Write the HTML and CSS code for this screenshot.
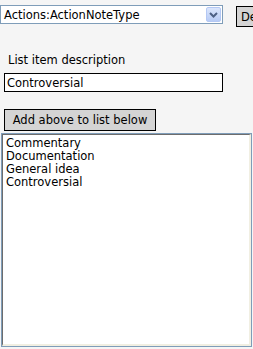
FILE: index.html
```html
<!DOCTYPE html>
<html lang="en">
<head>
    <meta charset="UTF-8">
    <title>List editor</title>
    <link rel="stylesheet" href="styles.css">
</head>
<body>
    <div class="top-row">
        <div class="select">
            <span class="select-text">Actions:ActionNoteType</span>
            <span class="select-arrow">
                <svg width="9" height="6" viewBox="0 0 9 6"><path d="M1 1 L4.5 4.5 L8 1" fill="none" stroke="#4d6185" stroke-width="2"/></svg>
            </span>
        </div>
        <button class="btn btn-cut">Delete</button>
    </div>
    <div class="label">List item description</div>
    <input class="text-input" type="text" value="Controversial">
    <button class="btn btn-add">Add above to list below</button>
    <div class="listbox">
        <div class="listbox-inner">
            <div>Commentary</div>
            <div>Documentation</div>
            <div>General idea</div>
            <div>Controversial</div>
        </div>
    </div>
</body>
</html>
```

FILE: styles.css
```css
html, body {
    overflow: hidden;
}
body {
    margin: 0;
    background: #f5f5f5;
    font-family: 'DejaVu Sans', Verdana, sans-serif;
    font-size: 11.5px;
    color: #000;
    width: 253px;
    height: 349px;
}
.top-row {
    display: flex;
    align-items: flex-start;
    padding-top: 5px;
    white-space: nowrap;
}
.select {
    flex-shrink: 0;
    width: 221px;
    height: 17px;
    border: 1px solid #7f9db9;
    background: #fff;
    display: flex;
    align-items: center;
    justify-content: space-between;
}
.select-text {
    padding-left: 3px;
}
.select-arrow {
    width: 15px;
    height: 15px;
    margin-right: 1px;
    background: linear-gradient(180deg, #dbe6fc, #b7cbf5);
    border: 1px solid #b4c8f4;
    border-radius: 2px;
    box-sizing: border-box;
    display: flex;
    align-items: center;
    justify-content: center;
}
.btn {
    font-family: 'DejaVu Sans', Verdana, sans-serif;
    font-size: 11.5px;
    background: #d4d4d4;
    border: 1px solid #000;
    padding: 0 8px;
    color: #000;
}
.btn-cut {
    flex-shrink: 0;
    margin-left: 13px;
    height: 21px;
    margin-top: 1px;
    padding: 0 4px;
}
.label {
    margin: 26px 0 0 8px;
    height: 14px;
}
.text-input {
    display: block;
    margin: 6px 0 0 4px;
    width: 219px;
    height: 19px;
    box-sizing: border-box;
    border: 1px solid #000;
    padding: 0 2px;
    font-family: 'DejaVu Sans', Verdana, sans-serif;
    font-size: 11.5px;
    outline: none;
}
.btn-add {
    display: block;
    margin: 17px 0 0 4px;
    height: 22px;
    width: 152px;
    padding: 0;
}
.listbox {
    margin: 2px 0 0 1px;
    width: 251px;
    height: 214px;
    box-sizing: border-box;
    border: 1px solid #7f9db9;
    background: #fff;
}
.listbox-inner {
    height: 100%;
    box-sizing: border-box;
    border-left: 1px solid #6d6d6d;
    border-top: 1px solid #6d6d6d;
    border-right: 2px solid #f1efe2;
    border-bottom: 2px solid #f1efe2;
    padding: 2px 3px 0;
    line-height: 13px;
}
```
